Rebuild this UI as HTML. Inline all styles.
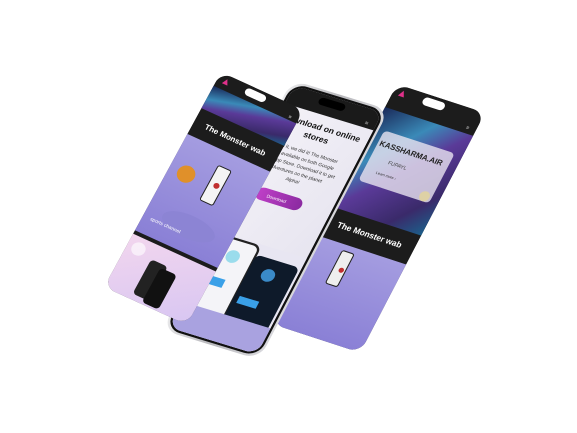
<!DOCTYPE html>
<html><head><meta charset="utf-8"><style>
html,body{margin:0;padding:0;background:#fff;width:577px;height:433px;overflow:hidden}
text{font-family:"Liberation Sans",sans-serif}
</style></head><body>
<svg width="577" height="433" viewBox="0 0 577 433" xmlns="http://www.w3.org/2000/svg">
<defs>
<linearGradient id="game" x1="0" y1="0" x2="1" y2="1"><stop offset="0" stop-color="#1a2a5a"/><stop offset=".3" stop-color="#3a8ab8"/><stop offset=".5" stop-color="#5a3a98"/><stop offset=".8" stop-color="#3a2a6a"/><stop offset="1" stop-color="#1c5f8a"/></linearGradient>
<linearGradient id="lav" x1="0" y1="0" x2="0" y2="1"><stop offset="0" stop-color="#a49ce0"/><stop offset="1" stop-color="#8a80d6"/></linearGradient>
<linearGradient id="pink" x1="0" y1="0" x2="1" y2="1"><stop offset="0" stop-color="#f2d6ee"/><stop offset="1" stop-color="#d8c6f2"/></linearGradient>
<linearGradient id="wht" x1="0" y1="0" x2="1" y2="1"><stop offset="0" stop-color="#f4f2f8"/><stop offset="1" stop-color="#e4e2ee"/></linearGradient>
<linearGradient id="btn" x1="0" y1="0" x2="1" y2="0"><stop offset="0" stop-color="#c040c8"/><stop offset="1" stop-color="#8a2aa0"/></linearGradient>
<linearGradient id="silver" x1="0" y1="0" x2="1" y2="0"><stop offset="0" stop-color="#e8e8ea"/><stop offset=".5" stop-color="#b8b8bc"/><stop offset="1" stop-color="#d8d8dc"/></linearGradient>
<clipPath id="scr"><rect x="0" y="0" width="90" height="250" rx="12"/></clipPath>
<clipPath id="scrm"><rect x="4" y="4" width="82" height="242" rx="11"/></clipPath>
</defs>

<!-- RIGHT PHONE -->
<g transform="matrix(0.98 0.32 -0.5 0.96 397 84)">
 <g clip-path="url(#scr)">
  <rect width="90" height="250" fill="#1c1c1c"/>
  <rect y="24" width="90" height="104" fill="url(#game)"/>
  <rect x="10" y="45" width="72" height="52" rx="4" fill="#e8e4f0" opacity=".8"/>
  <text x="12" y="60" font-size="7.5" font-weight="bold" fill="#222">KASSHARMA.AIR</text>
  <text x="28" y="74" font-size="5" fill="#444">FUPAYL</text>
  <text x="22" y="86" font-size="3.5" fill="#333">Learn more  ›</text>
  <circle cx="75" cy="92" r="5" fill="#e8d890" opacity=".7"/>
  <text x="12" y="145" font-size="8" font-weight="bold" fill="#fff">The Monster wab</text>
  <rect y="158" width="90" height="92" fill="url(#lav)"/>
  <rect x="28" y="164" width="12" height="34" rx="2" fill="#eee" stroke="#222" stroke-width="1"/>
  <circle cx="36" cy="182" r="2.5" fill="#c03030"/>
  <path d="M6 10 L9 4 L12 10 Z" fill="#e0308a"/>
  <rect x="30" y="3" width="22" height="8" rx="4" fill="#fff"/>
  <text x="80" y="20" font-size="5" fill="#ccc">≡</text>
 </g>
</g>

<!-- MIDDLE PHONE -->
<g transform="matrix(1.08 0.33 -0.52 1.0 292 80)">
 <rect width="90" height="250" rx="14" fill="url(#silver)"/>
 <rect x="2" y="2" width="86" height="246" rx="13" fill="#111"/>
 <g clip-path="url(#scrm)">
  <rect x="4" y="4" width="82" height="242" fill="url(#wht)"/>
  <rect x="4" y="4" width="82" height="18" fill="#1a1a1a"/>
  <rect x="30" y="7" width="24" height="7" rx="3.5" fill="#000"/>
  <text x="76" y="19" font-size="5" fill="#ccc">≡</text>
  <text x="8" y="36" font-size="7.5" font-weight="bold" fill="#111">Download on online</text>
  <text x="32" y="46" font-size="7.5" font-weight="bold" fill="#111">stores</text>
  <text x="8" y="60" font-size="4.4" fill="#333">We did it, we did it! The Monster</text>
  <text x="8" y="67" font-size="4.4" fill="#333">is now available on both Google</text>
  <text x="8" y="74" font-size="4.4" fill="#333">Play App Store. Download it to get</text>
  <text x="8" y="81" font-size="4.4" fill="#333">your adventures on the planet</text>
  <text x="36" y="88" font-size="4.4" fill="#333">Alpha!</text>
  <rect x="18" y="100" width="42" height="12" rx="6" fill="url(#btn)"/>
  <text x="28" y="108" font-size="4" fill="#fff">Download</text>
  <rect x="4" y="150" width="82" height="96" fill="#e8e6f2"/>
  <rect x="8" y="152" width="36" height="80" rx="6" fill="#f4f4f8" stroke="#222" stroke-width="2"/>
  <circle cx="26" cy="168" r="6" fill="#9adcec"/>
  <rect x="12" y="190" width="18" height="8" fill="#3aa0e8"/>
  <rect x="44" y="160" width="40" height="80" rx="5" fill="#0e1a2a"/>
  <circle cx="62" cy="175" r="6" fill="#3a8ac8"/>
  <rect x="48" y="200" width="18" height="7" fill="#3aa0e8"/>
  <rect x="4" y="220" width="82" height="26" fill="#a9a2e0"/>
 </g>
</g>

<!-- LEFT PHONE -->
<g transform="matrix(0.92 0.42 -0.468 0.86 221 72)">
 <g clip-path="url(#scr)">
  <rect width="90" height="250" fill="#1c1c1c"/>
  <rect y="16" width="90" height="26" fill="url(#game)"/>
  <text x="12" y="60" font-size="8" font-weight="bold" fill="#fff">The Monster wab</text>
  <rect y="72" width="90" height="112" fill="url(#lav)"/>
  <ellipse cx="45" cy="158" rx="28" ry="12" fill="#8c84d4"/>
  <circle cx="18" cy="110" r="9" fill="#e0902a"/>
  <rect x="42" y="88" width="14" height="40" rx="2" fill="#f4f4f4" stroke="#222" stroke-width="1"/>
  <circle cx="50" cy="108" r="3" fill="#c03030"/>
  <text x="8" y="168" font-size="5" fill="#fff">sports channel</text>
  <rect y="188" width="90" height="62" fill="url(#pink)"/>
  <rect x="28" y="204" width="18" height="40" rx="4" fill="#222"/>
  <rect x="40" y="208" width="18" height="40" rx="4" fill="#111"/>
  <circle cx="12" cy="200" r="7" fill="#fff" opacity=".6"/>
  <path d="M6 10 L9 4 L12 10 Z" fill="#e0308a"/>
  <rect x="30" y="3" width="22" height="8" rx="4" fill="#fff"/>
  <text x="80" y="14" font-size="5" fill="#ccc">≡</text>
 </g>
</g>
</svg>
</body></html>
